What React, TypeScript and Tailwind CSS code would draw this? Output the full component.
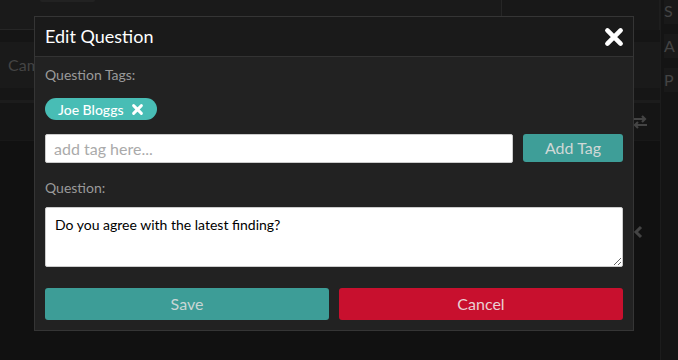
import { useState } from 'react';

const font = { fontFamily: 'Lato, "Open Sans", sans-serif' };

function BoldX({ size, stroke }: { size: number; stroke: number }) {
  return (
    <svg width={size} height={size} viewBox="0 0 20 20" aria-hidden>
      <path d="M4 4 L16 16 M16 4 L4 16" stroke="currentColor" strokeWidth={stroke} strokeLinecap="round" />
    </svg>
  );
}

function Backdrop() {
  return (
    <div className="flex h-[360px] w-full bg-[#111]">
      <div className="flex min-w-0 flex-1 flex-col">
        <div className="flex h-[30px] bg-[#151515]">
          <div className="w-[502px] rounded-br-md border-r border-b border-[#262626] bg-[#1a1a1a] pl-10">
            <div className="h-[2px] w-[55px] rounded-b bg-[#222]" />
          </div>
          <div className="flex-1 border-r border-[#1e1e1e] bg-[#181818]" />
        </div>
        <div className="h-[12px] bg-[#151515]" />
        <div className="flex h-[46px] items-center bg-[#1a1a1a] pl-2 text-[16px] text-[#444]">Cam</div>
        <div className="h-[12px] bg-[#161616]" />
        <div className="h-[3px] bg-[#1c1c1c]" />
        <div className="flex h-[37px] items-center justify-end bg-[#151515] pr-[12px] text-[#444]">
          <svg width="16" height="14" viewBox="0 0 16 14" aria-hidden>
            <path d="M1 4 H13 M10 1 L13 4 L10 7 M15 10 H3 M6 7 L3 10 L6 13" stroke="currentColor" strokeWidth="2.2" fill="none" />
          </svg>
        </div>
        <div className="flex h-[182px] items-center justify-end border-t border-[#181818] pr-[17px] text-[#444]">
          <svg width="10" height="14" viewBox="0 0 10 14" aria-hidden>
            <path d="M8 2 L3 7 L8 12" stroke="currentColor" strokeWidth="3" fill="none" />
          </svg>
        </div>
      </div>
      <div className="flex w-[18px] flex-col gap-[10px] border-l border-[#1c1c1c] bg-[#141414] pl-[3px] text-[16px] text-[#444]">
        <div className="h-[24px] bg-[#191919] leading-[22px]">S</div>
        <div className="h-[24px] bg-[#191919] leading-[24px]">A</div>
        <div className="h-[24px] bg-[#191919] leading-[24px]">P</div>
      </div>
    </div>
  );
}

export default function App() {
  const [tag, setTag] = useState('');
  const [question, setQuestion] = useState('Do you agree with the latest finding?');

  return (
    <div className="relative h-[360px] w-[678px] overflow-hidden" style={font}>
      <Backdrop />
      <div className="absolute top-[16px] left-[34px] flex w-[600px] flex-col border border-[#353535] bg-[#222]">
        <div className="flex h-[40px] items-center justify-between border-b border-[#333] bg-[#1a1a1a] pr-[8px] pl-[10px]">
          <span className="text-[18px] text-white">Edit Question</span>
          <span className="text-white">
            <BoldX size={22} stroke={4.2} />
          </span>
        </div>
        <div className="flex flex-col pt-[8px] pr-[10px] pb-[10px] pl-[10px]">
          <div className="h-[20px] text-[14px] leading-[20px] text-[#9a9a9a]">Question Tags:</div>
          <div className="mt-[13px] flex">
            <span className="flex h-[22px] items-center gap-[7px] rounded-full bg-[#48bdb5] px-[13px] text-[14px] font-medium text-white">
              Joe Bloggs
              <BoldX size={13} stroke={4.5} />
            </span>
          </div>
          <div className="mt-[14px] flex gap-[10px]">
            <input
              value={tag}
              onChange={(e) => setTag(e.target.value)}
              placeholder="add tag here..."
              className="h-[29px] flex-1 rounded-[2px] border border-[#ccc] bg-white px-[8px] text-[16px] text-black outline-none placeholder:text-[#aaa]"
            />
            <button className="h-[28px] w-[100px] rounded-[3px] bg-[#3e9e98] text-[16px] text-[#cfd8d7]">Add Tag</button>
          </div>
          <div className="mt-[15px] h-[20px] text-[14px] leading-[20px] text-[#9a9a9a]">Question:</div>
          <textarea
            value={question}
            onChange={(e) => setQuestion(e.target.value)}
            className="mt-[9px] h-[60px] rounded-[2px] border border-[#ccc] bg-white px-[9px] py-[6px] text-[14px] text-black outline-none"
          />
          <div className="mt-[21px] flex gap-[10px]">
            <button className="h-[32px] flex-1 rounded-[3px] bg-[#3d9d97] text-[16px] text-[#c9d6d5]">Save</button>
            <button className="h-[32px] flex-1 rounded-[3px] bg-[#c8102e] text-[16px] text-[#ead0d4]">Cancel</button>
          </div>
        </div>
      </div>
    </div>
  );
}
